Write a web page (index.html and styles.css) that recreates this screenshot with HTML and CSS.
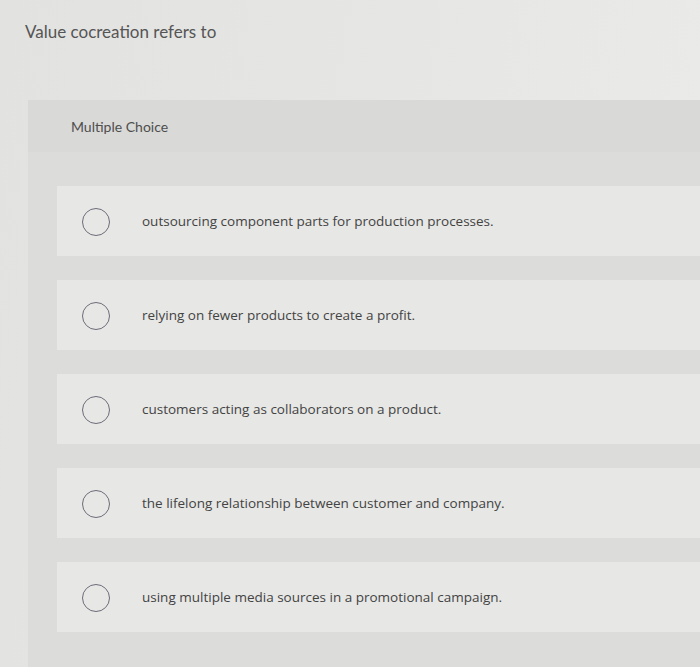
FILE: index.html
```html
<!DOCTYPE html>
<html lang="en">
<head>
<meta charset="utf-8">
<title>Value cocreation</title>
<link rel="stylesheet" href="styles.css">
</head>
<body>
<div class="page">
  <h1 class="question">Value cocreation refers to</h1>
  <section class="panel">
    <div class="panel-head">Multiple Choice</div>
    <div class="choices">
      <label class="choice"><span class="radio"></span><span class="text">outsourcing component parts for production processes.</span></label>
      <label class="choice"><span class="radio"></span><span class="text">relying on fewer products to create a profit.</span></label>
      <label class="choice"><span class="radio"></span><span class="text">customers acting as collaborators on a product.</span></label>
      <label class="choice"><span class="radio"></span><span class="text">the lifelong relationship between customer and company.</span></label>
      <label class="choice"><span class="radio"></span><span class="text">using multiple media sources in a promotional campaign.</span></label>
    </div>
  </section>
</div>
</body>
</html>
```
FILE: styles.css
```css
html, body {
  margin: 0;
  padding: 0;
}
body {
  background: linear-gradient(100deg, #e2e2e0 0%, #e6e6e4 50%, #ebebe9 100%);
  font-family: "Lato", "Open Sans", sans-serif;
  color: #505050;
  height: 667px;
  overflow: hidden;
}
.page {
  padding: 20px 0 0 25px;
}
.question {
  margin: 0;
  font-size: 17px;
  font-weight: 400;
  line-height: 24px;
  color: #555555;
}
.panel {
  margin: 56px 0 0 3px;
  background: #dcdcda;
  height: 600px;
}
.panel-head {
  height: 52px;
  background: #d9d9d7;
  display: flex;
  align-items: center;
  padding-left: 43px;
  font-size: 14px;
  color: #4e4e4e;
}
.choices {
  padding: 34px 0 0 29px;
  display: flex;
  flex-direction: column;
  gap: 24px;
}
.choice {
  height: 70px;
  background: #e7e7e5;
  display: flex;
  align-items: center;
  padding-left: 25px;
}
.radio {
  width: 26px;
  height: 26px;
  border: 1.6px solid #6c6c7a;
  border-radius: 50%;
  flex: none;
  margin-top: 1px;
}
.text {
  margin-left: 32px;
  font-family: "Open Sans", "Lato", sans-serif;
  font-size: 13.5px;
  color: #434343;
}
```
